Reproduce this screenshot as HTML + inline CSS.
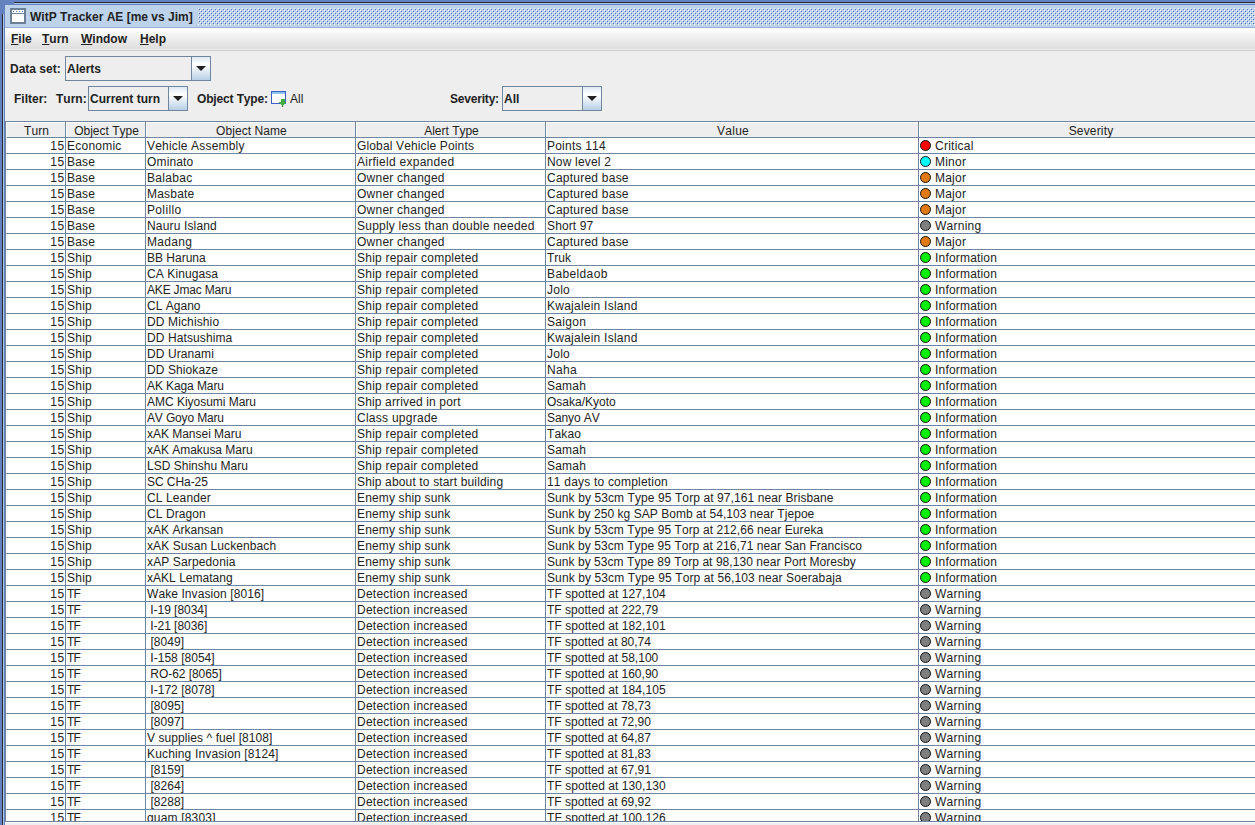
<!DOCTYPE html>
<html><head><meta charset="utf-8">
<style>
*{margin:0;padding:0;box-sizing:border-box}
html,body{width:1255px;height:825px;overflow:hidden}
body{position:relative;font-kerning:none;text-rendering:optimizeSpeed;background:#6382bf;font-family:"Liberation Sans",sans-serif;font-size:12px;color:#222;line-height:16px}
div,span,svg{position:absolute;white-space:pre}
.b{font-weight:bold}
#title{left:5px;top:5px;width:1250px;height:22px;background:#bdd3ec}
#menubar{left:5px;top:28px;width:1250px;height:23px;background:linear-gradient(#ffffff,#dadada)}
#content{left:5px;top:51px;width:1250px;height:774px;background:#eeeeee}
.combo{height:25px;border:1px solid #6f86a0;background:#eeeeee}
.cbtn{top:0;height:23px;border-left:1px solid #6f86a0;background:linear-gradient(#dde8f3 0%,#ffffff 30%,#ffffff 35%,#b8cfe5 100%)}
.arrow{width:0;height:0;border-left:5px solid transparent;border-right:5px solid transparent;border-top:5px solid #222}
#sp{left:5px;top:121px;width:1260px;height:701px;border-top:1px solid #6f86a0;border-left:1px solid #6f86a0;border-bottom:1px solid #6f86a0;}
#spw{left:5px;top:822px;width:1250px;height:1px;background:#ffffff}
#tbl{left:6px;top:122px;width:1249px;height:699px;overflow:hidden;background:#ffffff}
#hdr{left:0;top:0;width:1249px;height:16px;background:#eeeeee}
.hc{top:123px;height:15px;text-align:center;line-height:16px}
.hd{top:122px;width:1px;height:16px;background:#6f86a0}
.hw{top:122px;width:1px;height:15px;background:#ffffff}
#hbot{left:1px;top:15px;width:1248px;height:1px;background:#6f86a0}
#htop{left:0;top:0;width:1249px;height:1px;background:#ffffff}
.r{left:0;height:16px;width:1249px}
.c{top:0;line-height:16px}
.num{text-align:right}
.dot{top:2px;width:11px;height:11px;border-radius:50%;border:1px solid #111}
.gh{left:6px;width:1255px;height:1px;background:#6f86a0}
.gv{top:122px;width:1px;height:700px;background:#6f86a0}
</style></head><body>
<!-- frame -->
<div style="left:14px;top:2px;width:1241px;height:1px;background:#2a2a35"></div>
<div style="left:2px;top:14px;width:1px;height:811px;background:#2a2a35"></div>
<div style="left:14px;top:3px;width:1241px;height:1px;background:#a9c6e8"></div>
<div style="left:3px;top:14px;width:1px;height:811px;background:#a9c6e8"></div>

<div id="title">
  <svg style="left:5px;top:3px" width="16" height="16" viewBox="0 0 16 16">
    <rect x="1" y="1" width="14" height="14" fill="#ffffff" stroke="#6b7f96" stroke-width="2"/>
    <rect x="2" y="5" width="12" height="1" fill="#6b7f96"/>
    <rect x="3" y="3" width="1" height="1" fill="#3b6fd0"/>
    <rect x="6" y="3" width="1" height="1" fill="#3b6fd0"/>
    <rect x="9" y="3" width="1" height="1" fill="#3b6fd0"/>
    <rect x="12" y="3" width="1" height="1" fill="#3b6fd0"/>
  </svg>
  <div class="b" style="left:25px;top:4px">WitP Tracker AE [me vs Jim]</div>
  <svg style="left:193px;top:3px" width="1057" height="17">
    <defs><pattern id="bump" width="4" height="4" patternUnits="userSpaceOnUse">
      <rect x="0" y="0" width="1" height="1" fill="#ffffff"/>
      <rect x="2" y="2" width="1" height="1" fill="#ffffff"/>
      <rect x="1" y="1" width="1" height="1" fill="#4a68c8"/>
      <rect x="3" y="3" width="1" height="1" fill="#4a68c8"/>
    </pattern></defs>
    <rect width="1057" height="17" fill="url(#bump)"/>
  </svg>
</div>
<div style="left:5px;top:27px;width:1250px;height:1px;background:#9aaed6"></div>

<div id="menubar">
  <div class="b" style="left:6px;top:3px"><u>F</u>ile</div>
  <div class="b" style="left:37px;top:3px"><u>T</u>urn</div>
  <div class="b" style="left:76px;top:3px"><u>W</u>indow</div>
  <div class="b" style="left:135px;top:3px"><u>H</u>elp</div>
</div>
<div style="left:5px;top:49px;width:1250px;height:1px;background:#eeeeee"></div>
<div style="left:5px;top:50px;width:1250px;height:1px;background:#cccccc"></div>

<div id="content"></div>
<div class="b" style="left:10px;top:61px">Data set:</div>
<div class="combo" style="left:65px;top:56px;width:146px">
  <div class="b" style="left:1px;top:4px">Alerts</div>
  <div class="cbtn" style="left:125px;width:19px"><div class="arrow" style="left:4px;top:9px"></div></div>
</div>
<div class="b" style="left:14px;top:91px">Filter:</div>
<div class="b" style="left:56px;top:91px">Turn:</div>
<div class="combo" style="left:88px;top:86px;width:100px">
  <div class="b" style="left:1px;top:4px">Current turn</div>
  <div class="cbtn" style="left:79px;width:19px"><div class="arrow" style="left:4px;top:9px"></div></div>
</div>
<div class="b" style="left:197px;top:91px;letter-spacing:-0.15px">Object Type:</div>
<svg style="left:271px;top:91px" width="16" height="16" viewBox="0 0 16 16" shape-rendering="crispEdges">
  <rect x="0" y="0" width="15" height="13" fill="#3d5fc4"/>
  <rect x="1" y="1" width="13" height="2" fill="#8ec3ee"/>
  <rect x="1" y="3" width="13" height="9" fill="#ffffff"/>
  <rect x="10" y="8" width="4" height="3" fill="#3fae3f"/>
  <polygon points="7,11 15,11 11,15" fill="#3fae3f"/>
  <rect x="11" y="15" width="1" height="1" fill="#1f6a1f"/>
</svg>
<div style="left:290px;top:91px">All</div>
<div class="b" style="left:450px;top:91px;letter-spacing:-0.2px">Severity:</div>
<div class="combo" style="left:502px;top:86px;width:100px">
  <div class="b" style="left:1px;top:4px">All</div>
  <div class="cbtn" style="left:79px;width:19px"><div class="arrow" style="left:4px;top:9px"></div></div>
</div>

<div id="sp"></div>
<div id="spw"></div>
<div id="tbl">
  <div id="hdr">
    <div id="htop"></div>
    <div id="hbot"></div>
  </div>
</div>
<div style="left:6px;top:122px;width:1249px;height:699px;overflow:hidden">
  <div style="left:-6px;top:-122px;width:1255px;height:825px">
<div class="hc" style="left:7px;width:59px;letter-spacing:0.070px;">Turn</div>
<div class="hd" style="left:65px"></div>
<div class="hw" style="left:6px"></div>
<div class="hc" style="left:67px;width:79px;letter-spacing:0.005px;">Object Type</div>
<div class="hd" style="left:145px"></div>
<div class="hw" style="left:66px"></div>
<div class="hc" style="left:147px;width:209px;letter-spacing:0.066px;">Object Name</div>
<div class="hd" style="left:355px"></div>
<div class="hw" style="left:146px"></div>
<div class="hc" style="left:357px;width:189px;letter-spacing:-0.010px;">Alert Type</div>
<div class="hd" style="left:545px"></div>
<div class="hw" style="left:356px"></div>
<div class="hc" style="left:547px;width:372px;letter-spacing:0.286px;">Value</div>
<div class="hd" style="left:918px"></div>
<div class="hw" style="left:546px"></div>
<div class="hc" style="left:920px;width:342px;letter-spacing:0.158px;">Severity</div>
<div class="hd" style="left:1261px"></div>
<div class="hw" style="left:919px"></div>
<div class="r" style="top:138px"><span class="c num" style="left:6px;width:59px;letter-spacing:0.696px;">15</span><span class="c" style="left:67px;letter-spacing:0.240px;">Economic</span><span class="c" style="left:147px;letter-spacing:0.179px;">Vehicle&#32;Assembly</span><span class="c" style="left:357px;letter-spacing:0.141px;">Global&#32;Vehicle&#32;Points</span><span class="c" style="left:547px;letter-spacing:0.220px;">Points&#32;114</span><span class="dot" style="left:920px;background:#ff0000"></span><span class="c" style="left:935px;letter-spacing:0.243px;">Critical</span></div>
<div class="r" style="top:154px"><span class="c num" style="left:6px;width:59px;letter-spacing:0.696px;">15</span><span class="c" style="left:67px;letter-spacing:0.151px;">Base</span><span class="c" style="left:147px;letter-spacing:0.156px;">Ominato</span><span class="c" style="left:357px;letter-spacing:0.276px;">Airfield&#32;expanded</span><span class="c" style="left:547px;letter-spacing:0.179px;">Now&#32;level&#32;2</span><span class="dot" style="left:920px;background:#00ffff"></span><span class="c" style="left:935px;letter-spacing:0.223px;">Minor</span></div>
<div class="r" style="top:170px"><span class="c num" style="left:6px;width:59px;letter-spacing:0.696px;">15</span><span class="c" style="left:67px;letter-spacing:0.151px;">Base</span><span class="c" style="left:147px;letter-spacing:0.297px;">Balabac</span><span class="c" style="left:357px;letter-spacing:0.235px;">Owner&#32;changed</span><span class="c" style="left:547px;letter-spacing:0.235px;">Captured&#32;base</span><span class="dot" style="left:920px;background:#e07b12"></span><span class="c" style="left:935px;letter-spacing:0.223px;">Major</span></div>
<div class="r" style="top:186px"><span class="c num" style="left:6px;width:59px;letter-spacing:0.696px;">15</span><span class="c" style="left:67px;letter-spacing:0.151px;">Base</span><span class="c" style="left:147px;letter-spacing:0.203px;">Masbate</span><span class="c" style="left:357px;letter-spacing:0.235px;">Owner&#32;changed</span><span class="c" style="left:547px;letter-spacing:0.235px;">Captured&#32;base</span><span class="dot" style="left:920px;background:#e07b12"></span><span class="c" style="left:935px;letter-spacing:0.223px;">Major</span></div>
<div class="r" style="top:202px"><span class="c num" style="left:6px;width:59px;letter-spacing:0.696px;">15</span><span class="c" style="left:67px;letter-spacing:0.151px;">Base</span><span class="c" style="left:147px;letter-spacing:0.347px;">Polillo</span><span class="c" style="left:357px;letter-spacing:0.235px;">Owner&#32;changed</span><span class="c" style="left:547px;letter-spacing:0.235px;">Captured&#32;base</span><span class="dot" style="left:920px;background:#e07b12"></span><span class="c" style="left:935px;letter-spacing:0.223px;">Major</span></div>
<div class="r" style="top:218px"><span class="c num" style="left:6px;width:59px;letter-spacing:0.696px;">15</span><span class="c" style="left:67px;letter-spacing:0.151px;">Base</span><span class="c" style="left:147px;letter-spacing:0.156px;">Nauru&#32;Island</span><span class="c" style="left:357px;letter-spacing:0.227px;">Supply&#32;less&#32;than&#32;double&#32;needed</span><span class="c" style="left:547px;letter-spacing:0.126px;">Short&#32;97</span><span class="dot" style="left:920px;background:#7f7f7f"></span><span class="c" style="left:935px;letter-spacing:0.252px;">Warning</span></div>
<div class="r" style="top:234px"><span class="c num" style="left:6px;width:59px;letter-spacing:0.696px;">15</span><span class="c" style="left:67px;letter-spacing:0.151px;">Base</span><span class="c" style="left:147px;letter-spacing:0.320px;">Madang</span><span class="c" style="left:357px;letter-spacing:0.235px;">Owner&#32;changed</span><span class="c" style="left:547px;letter-spacing:0.235px;">Captured&#32;base</span><span class="dot" style="left:920px;background:#e07b12"></span><span class="c" style="left:935px;letter-spacing:0.223px;">Major</span></div>
<div class="r" style="top:250px"><span class="c num" style="left:6px;width:59px;letter-spacing:0.696px;">15</span><span class="c" style="left:67px;letter-spacing:0.235px;">Ship</span><span class="c" style="left:147px;letter-spacing:0.003px;">BB&#32;Haruna</span><span class="c" style="left:357px;letter-spacing:0.224px;">Ship&#32;repair&#32;completed</span><span class="c" style="left:547px;letter-spacing:-0.011px;">Truk</span><span class="dot" style="left:920px;background:#00ee00"></span><span class="c" style="left:935px;letter-spacing:0.188px;">Information</span></div>
<div class="r" style="top:266px"><span class="c num" style="left:6px;width:59px;letter-spacing:0.696px;">15</span><span class="c" style="left:67px;letter-spacing:0.235px;">Ship</span><span class="c" style="left:147px;letter-spacing:0.092px;">CA&#32;Kinugasa</span><span class="c" style="left:357px;letter-spacing:0.224px;">Ship&#32;repair&#32;completed</span><span class="c" style="left:547px;letter-spacing:0.376px;">Babeldaob</span><span class="dot" style="left:920px;background:#00ee00"></span><span class="c" style="left:935px;letter-spacing:0.188px;">Information</span></div>
<div class="r" style="top:282px"><span class="c num" style="left:6px;width:59px;letter-spacing:0.696px;">15</span><span class="c" style="left:67px;letter-spacing:0.235px;">Ship</span><span class="c" style="left:147px;letter-spacing:-0.182px;">AKE&#32;Jmac&#32;Maru</span><span class="c" style="left:357px;letter-spacing:0.224px;">Ship&#32;repair&#32;completed</span><span class="c" style="left:547px;letter-spacing:0.236px;">Jolo</span><span class="dot" style="left:920px;background:#00ee00"></span><span class="c" style="left:935px;letter-spacing:0.188px;">Information</span></div>
<div class="r" style="top:298px"><span class="c num" style="left:6px;width:59px;letter-spacing:0.696px;">15</span><span class="c" style="left:67px;letter-spacing:0.235px;">Ship</span><span class="c" style="left:147px;letter-spacing:0.023px;">CL&#32;Agano</span><span class="c" style="left:357px;letter-spacing:0.224px;">Ship&#32;repair&#32;completed</span><span class="c" style="left:547px;letter-spacing:0.241px;">Kwajalein&#32;Island</span><span class="dot" style="left:920px;background:#00ee00"></span><span class="c" style="left:935px;letter-spacing:0.188px;">Information</span></div>
<div class="r" style="top:314px"><span class="c num" style="left:6px;width:59px;letter-spacing:0.696px;">15</span><span class="c" style="left:67px;letter-spacing:0.235px;">Ship</span><span class="c" style="left:147px;letter-spacing:0.128px;">DD&#32;Michishio</span><span class="c" style="left:357px;letter-spacing:0.224px;">Ship&#32;repair&#32;completed</span><span class="c" style="left:547px;letter-spacing:0.320px;">Saigon</span><span class="dot" style="left:920px;background:#00ee00"></span><span class="c" style="left:935px;letter-spacing:0.188px;">Information</span></div>
<div class="r" style="top:330px"><span class="c num" style="left:6px;width:59px;letter-spacing:0.696px;">15</span><span class="c" style="left:67px;letter-spacing:0.235px;">Ship</span><span class="c" style="left:147px;letter-spacing:0.104px;">DD&#32;Hatsushima</span><span class="c" style="left:357px;letter-spacing:0.224px;">Ship&#32;repair&#32;completed</span><span class="c" style="left:547px;letter-spacing:0.241px;">Kwajalein&#32;Island</span><span class="dot" style="left:920px;background:#00ee00"></span><span class="c" style="left:935px;letter-spacing:0.188px;">Information</span></div>
<div class="r" style="top:346px"><span class="c num" style="left:6px;width:59px;letter-spacing:0.696px;">15</span><span class="c" style="left:67px;letter-spacing:0.235px;">Ship</span><span class="c" style="left:147px;letter-spacing:0.088px;">DD&#32;Uranami</span><span class="c" style="left:357px;letter-spacing:0.224px;">Ship&#32;repair&#32;completed</span><span class="c" style="left:547px;letter-spacing:0.236px;">Jolo</span><span class="dot" style="left:920px;background:#00ee00"></span><span class="c" style="left:935px;letter-spacing:0.188px;">Information</span></div>
<div class="r" style="top:362px"><span class="c num" style="left:6px;width:59px;letter-spacing:0.696px;">15</span><span class="c" style="left:67px;letter-spacing:0.235px;">Ship</span><span class="c" style="left:147px;letter-spacing:0.093px;">DD&#32;Shiokaze</span><span class="c" style="left:357px;letter-spacing:0.224px;">Ship&#32;repair&#32;completed</span><span class="c" style="left:547px;letter-spacing:0.317px;">Naha</span><span class="dot" style="left:920px;background:#00ee00"></span><span class="c" style="left:935px;letter-spacing:0.188px;">Information</span></div>
<div class="r" style="top:378px"><span class="c num" style="left:6px;width:59px;letter-spacing:0.696px;">15</span><span class="c" style="left:67px;letter-spacing:0.235px;">Ship</span><span class="c" style="left:147px;letter-spacing:-0.098px;">AK&#32;Kaga&#32;Maru</span><span class="c" style="left:357px;letter-spacing:0.224px;">Ship&#32;repair&#32;completed</span><span class="c" style="left:547px;letter-spacing:0.220px;">Samah</span><span class="dot" style="left:920px;background:#00ee00"></span><span class="c" style="left:935px;letter-spacing:0.188px;">Information</span></div>
<div class="r" style="top:394px"><span class="c num" style="left:6px;width:59px;letter-spacing:0.696px;">15</span><span class="c" style="left:67px;letter-spacing:0.235px;">Ship</span><span class="c" style="left:147px;letter-spacing:-0.022px;">AMC&#32;Kiyosumi&#32;Maru</span><span class="c" style="left:357px;letter-spacing:0.145px;">Ship&#32;arrived&#32;in&#32;port</span><span class="c" style="left:547px;letter-spacing:0.004px;">Osaka/Kyoto</span><span class="dot" style="left:920px;background:#00ee00"></span><span class="c" style="left:935px;letter-spacing:0.188px;">Information</span></div>
<div class="r" style="top:410px"><span class="c num" style="left:6px;width:59px;letter-spacing:0.696px;">15</span><span class="c" style="left:67px;letter-spacing:0.235px;">Ship</span><span class="c" style="left:147px;letter-spacing:-0.153px;">AV&#32;Goyo&#32;Maru</span><span class="c" style="left:357px;letter-spacing:0.261px;">Class&#32;upgrade</span><span class="c" style="left:547px;letter-spacing:-0.101px;">Sanyo&#32;AV</span><span class="dot" style="left:920px;background:#00ee00"></span><span class="c" style="left:935px;letter-spacing:0.188px;">Information</span></div>
<div class="r" style="top:426px"><span class="c num" style="left:6px;width:59px;letter-spacing:0.696px;">15</span><span class="c" style="left:67px;letter-spacing:0.235px;">Ship</span><span class="c" style="left:147px;letter-spacing:-0.023px;">xAK&#32;Mansei&#32;Maru</span><span class="c" style="left:357px;letter-spacing:0.224px;">Ship&#32;repair&#32;completed</span><span class="c" style="left:547px;letter-spacing:0.154px;">Takao</span><span class="dot" style="left:920px;background:#00ee00"></span><span class="c" style="left:935px;letter-spacing:0.188px;">Information</span></div>
<div class="r" style="top:442px"><span class="c num" style="left:6px;width:59px;letter-spacing:0.696px;">15</span><span class="c" style="left:67px;letter-spacing:0.235px;">Ship</span><span class="c" style="left:147px;letter-spacing:-0.032px;">xAK&#32;Amakusa&#32;Maru</span><span class="c" style="left:357px;letter-spacing:0.224px;">Ship&#32;repair&#32;completed</span><span class="c" style="left:547px;letter-spacing:0.220px;">Samah</span><span class="dot" style="left:920px;background:#00ee00"></span><span class="c" style="left:935px;letter-spacing:0.188px;">Information</span></div>
<div class="r" style="top:458px"><span class="c num" style="left:6px;width:59px;letter-spacing:0.696px;">15</span><span class="c" style="left:67px;letter-spacing:0.235px;">Ship</span><span class="c" style="left:147px;letter-spacing:0.006px;">LSD&#32;Shinshu&#32;Maru</span><span class="c" style="left:357px;letter-spacing:0.224px;">Ship&#32;repair&#32;completed</span><span class="c" style="left:547px;letter-spacing:0.220px;">Samah</span><span class="dot" style="left:920px;background:#00ee00"></span><span class="c" style="left:935px;letter-spacing:0.188px;">Information</span></div>
<div class="r" style="top:474px"><span class="c num" style="left:6px;width:59px;letter-spacing:0.696px;">15</span><span class="c" style="left:67px;letter-spacing:0.235px;">Ship</span><span class="c" style="left:147px;letter-spacing:-0.063px;">SC&#32;CHa-25</span><span class="c" style="left:357px;letter-spacing:0.149px;">Ship&#32;about&#32;to&#32;start&#32;building</span><span class="c" style="left:547px;letter-spacing:0.198px;">11&#32;days&#32;to&#32;completion</span><span class="dot" style="left:920px;background:#00ee00"></span><span class="c" style="left:935px;letter-spacing:0.188px;">Information</span></div>
<div class="r" style="top:490px"><span class="c num" style="left:6px;width:59px;letter-spacing:0.696px;">15</span><span class="c" style="left:67px;letter-spacing:0.235px;">Ship</span><span class="c" style="left:147px;letter-spacing:0.117px;">CL&#32;Leander</span><span class="c" style="left:357px;letter-spacing:0.138px;">Enemy&#32;ship&#32;sunk</span><span class="c" style="left:547px;letter-spacing:0.090px;">Sunk&#32;by&#32;53cm&#32;Type&#32;95&#32;Torp&#32;at&#32;97,161&#32;near&#32;Brisbane</span><span class="dot" style="left:920px;background:#00ee00"></span><span class="c" style="left:935px;letter-spacing:0.188px;">Information</span></div>
<div class="r" style="top:506px"><span class="c num" style="left:6px;width:59px;letter-spacing:0.696px;">15</span><span class="c" style="left:67px;letter-spacing:0.235px;">Ship</span><span class="c" style="left:147px;letter-spacing:0.077px;">CL&#32;Dragon</span><span class="c" style="left:357px;letter-spacing:0.138px;">Enemy&#32;ship&#32;sunk</span><span class="c" style="left:547px;letter-spacing:0.040px;">Sunk&#32;by&#32;250&#32;kg&#32;SAP&#32;Bomb&#32;at&#32;54,103&#32;near&#32;Tjepoe</span><span class="dot" style="left:920px;background:#00ee00"></span><span class="c" style="left:935px;letter-spacing:0.188px;">Information</span></div>
<div class="r" style="top:522px"><span class="c num" style="left:6px;width:59px;letter-spacing:0.696px;">15</span><span class="c" style="left:67px;letter-spacing:0.235px;">Ship</span><span class="c" style="left:147px;letter-spacing:0.015px;">xAK&#32;Arkansan</span><span class="c" style="left:357px;letter-spacing:0.138px;">Enemy&#32;ship&#32;sunk</span><span class="c" style="left:547px;letter-spacing:0.072px;">Sunk&#32;by&#32;53cm&#32;Type&#32;95&#32;Torp&#32;at&#32;212,66&#32;near&#32;Eureka</span><span class="dot" style="left:920px;background:#00ee00"></span><span class="c" style="left:935px;letter-spacing:0.188px;">Information</span></div>
<div class="r" style="top:538px"><span class="c num" style="left:6px;width:59px;letter-spacing:0.696px;">15</span><span class="c" style="left:67px;letter-spacing:0.235px;">Ship</span><span class="c" style="left:147px;letter-spacing:0.088px;">xAK&#32;Susan&#32;Luckenbach</span><span class="c" style="left:357px;letter-spacing:0.138px;">Enemy&#32;ship&#32;sunk</span><span class="c" style="left:547px;letter-spacing:0.065px;">Sunk&#32;by&#32;53cm&#32;Type&#32;95&#32;Torp&#32;at&#32;216,71&#32;near&#32;San&#32;Francisco</span><span class="dot" style="left:920px;background:#00ee00"></span><span class="c" style="left:935px;letter-spacing:0.188px;">Information</span></div>
<div class="r" style="top:554px"><span class="c num" style="left:6px;width:59px;letter-spacing:0.696px;">15</span><span class="c" style="left:67px;letter-spacing:0.235px;">Ship</span><span class="c" style="left:147px;letter-spacing:0.130px;">xAP&#32;Sarpedonia</span><span class="c" style="left:357px;letter-spacing:0.138px;">Enemy&#32;ship&#32;sunk</span><span class="c" style="left:547px;letter-spacing:0.051px;">Sunk&#32;by&#32;53cm&#32;Type&#32;89&#32;Torp&#32;at&#32;98,130&#32;near&#32;Port&#32;Moresby</span><span class="dot" style="left:920px;background:#00ee00"></span><span class="c" style="left:935px;letter-spacing:0.188px;">Information</span></div>
<div class="r" style="top:570px"><span class="c num" style="left:6px;width:59px;letter-spacing:0.696px;">15</span><span class="c" style="left:67px;letter-spacing:0.235px;">Ship</span><span class="c" style="left:147px;letter-spacing:0.022px;">xAKL&#32;Lematang</span><span class="c" style="left:357px;letter-spacing:0.138px;">Enemy&#32;ship&#32;sunk</span><span class="c" style="left:547px;letter-spacing:0.104px;">Sunk&#32;by&#32;53cm&#32;Type&#32;95&#32;Torp&#32;at&#32;56,103&#32;near&#32;Soerabaja</span><span class="dot" style="left:920px;background:#00ee00"></span><span class="c" style="left:935px;letter-spacing:0.188px;">Information</span></div>
<div class="r" style="top:586px"><span class="c num" style="left:6px;width:59px;letter-spacing:0.696px;">15</span><span class="c" style="left:67px;letter-spacing:-0.865px;">TF</span><span class="c" style="left:147px;letter-spacing:0.084px;">Wake&#32;Invasion&#32;[8016]</span><span class="c" style="left:357px;letter-spacing:0.247px;">Detection&#32;increased</span><span class="c" style="left:547px;letter-spacing:0.060px;">TF&#32;spotted&#32;at&#32;127,104</span><span class="dot" style="left:920px;background:#7f7f7f"></span><span class="c" style="left:935px;letter-spacing:0.252px;">Warning</span></div>
<div class="r" style="top:602px"><span class="c num" style="left:6px;width:59px;letter-spacing:0.696px;">15</span><span class="c" style="left:67px;letter-spacing:-0.865px;">TF</span><span class="c" style="left:147px;letter-spacing:-0.039px;">&#32;I-19&#32;[8034]</span><span class="c" style="left:357px;letter-spacing:0.247px;">Detection&#32;increased</span><span class="c" style="left:547px;letter-spacing:0.028px;">TF&#32;spotted&#32;at&#32;222,79</span><span class="dot" style="left:920px;background:#7f7f7f"></span><span class="c" style="left:935px;letter-spacing:0.252px;">Warning</span></div>
<div class="r" style="top:618px"><span class="c num" style="left:6px;width:59px;letter-spacing:0.696px;">15</span><span class="c" style="left:67px;letter-spacing:-0.865px;">TF</span><span class="c" style="left:147px;letter-spacing:-0.039px;">&#32;I-21&#32;[8036]</span><span class="c" style="left:357px;letter-spacing:0.247px;">Detection&#32;increased</span><span class="c" style="left:547px;letter-spacing:0.060px;">TF&#32;spotted&#32;at&#32;182,101</span><span class="dot" style="left:920px;background:#7f7f7f"></span><span class="c" style="left:935px;letter-spacing:0.252px;">Warning</span></div>
<div class="r" style="top:634px"><span class="c num" style="left:6px;width:59px;letter-spacing:0.696px;">15</span><span class="c" style="left:67px;letter-spacing:-0.865px;">TF</span><span class="c" style="left:147px;letter-spacing:0.045px;">&#32;[8049]</span><span class="c" style="left:357px;letter-spacing:0.247px;">Detection&#32;increased</span><span class="c" style="left:547px;letter-spacing:-0.007px;">TF&#32;spotted&#32;at&#32;80,74</span><span class="dot" style="left:920px;background:#7f7f7f"></span><span class="c" style="left:935px;letter-spacing:0.252px;">Warning</span></div>
<div class="r" style="top:650px"><span class="c num" style="left:6px;width:59px;letter-spacing:0.696px;">15</span><span class="c" style="left:67px;letter-spacing:-0.865px;">TF</span><span class="c" style="left:147px;letter-spacing:0.018px;">&#32;I-158&#32;[8054]</span><span class="c" style="left:357px;letter-spacing:0.247px;">Detection&#32;increased</span><span class="c" style="left:547px;letter-spacing:0.028px;">TF&#32;spotted&#32;at&#32;58,100</span><span class="dot" style="left:920px;background:#7f7f7f"></span><span class="c" style="left:935px;letter-spacing:0.252px;">Warning</span></div>
<div class="r" style="top:666px"><span class="c num" style="left:6px;width:59px;letter-spacing:0.696px;">15</span><span class="c" style="left:67px;letter-spacing:-0.865px;">TF</span><span class="c" style="left:147px;letter-spacing:-0.051px;">&#32;RO-62&#32;[8065]</span><span class="c" style="left:357px;letter-spacing:0.247px;">Detection&#32;increased</span><span class="c" style="left:547px;letter-spacing:0.028px;">TF&#32;spotted&#32;at&#32;160,90</span><span class="dot" style="left:920px;background:#7f7f7f"></span><span class="c" style="left:935px;letter-spacing:0.252px;">Warning</span></div>
<div class="r" style="top:682px"><span class="c num" style="left:6px;width:59px;letter-spacing:0.696px;">15</span><span class="c" style="left:67px;letter-spacing:-0.865px;">TF</span><span class="c" style="left:147px;letter-spacing:0.018px;">&#32;I-172&#32;[8078]</span><span class="c" style="left:357px;letter-spacing:0.247px;">Detection&#32;increased</span><span class="c" style="left:547px;letter-spacing:0.060px;">TF&#32;spotted&#32;at&#32;184,105</span><span class="dot" style="left:920px;background:#7f7f7f"></span><span class="c" style="left:935px;letter-spacing:0.252px;">Warning</span></div>
<div class="r" style="top:698px"><span class="c num" style="left:6px;width:59px;letter-spacing:0.696px;">15</span><span class="c" style="left:67px;letter-spacing:-0.865px;">TF</span><span class="c" style="left:147px;letter-spacing:0.045px;">&#32;[8095]</span><span class="c" style="left:357px;letter-spacing:0.247px;">Detection&#32;increased</span><span class="c" style="left:547px;letter-spacing:-0.007px;">TF&#32;spotted&#32;at&#32;78,73</span><span class="dot" style="left:920px;background:#7f7f7f"></span><span class="c" style="left:935px;letter-spacing:0.252px;">Warning</span></div>
<div class="r" style="top:714px"><span class="c num" style="left:6px;width:59px;letter-spacing:0.696px;">15</span><span class="c" style="left:67px;letter-spacing:-0.865px;">TF</span><span class="c" style="left:147px;letter-spacing:0.045px;">&#32;[8097]</span><span class="c" style="left:357px;letter-spacing:0.247px;">Detection&#32;increased</span><span class="c" style="left:547px;letter-spacing:-0.007px;">TF&#32;spotted&#32;at&#32;72,90</span><span class="dot" style="left:920px;background:#7f7f7f"></span><span class="c" style="left:935px;letter-spacing:0.252px;">Warning</span></div>
<div class="r" style="top:730px"><span class="c num" style="left:6px;width:59px;letter-spacing:0.696px;">15</span><span class="c" style="left:67px;letter-spacing:-0.865px;">TF</span><span class="c" style="left:147px;letter-spacing:0.074px;">V&#32;supplies&#32;^&#32;fuel&#32;[8108]</span><span class="c" style="left:357px;letter-spacing:0.247px;">Detection&#32;increased</span><span class="c" style="left:547px;letter-spacing:-0.007px;">TF&#32;spotted&#32;at&#32;64,87</span><span class="dot" style="left:920px;background:#7f7f7f"></span><span class="c" style="left:935px;letter-spacing:0.252px;">Warning</span></div>
<div class="r" style="top:746px"><span class="c num" style="left:6px;width:59px;letter-spacing:0.696px;">15</span><span class="c" style="left:67px;letter-spacing:-0.865px;">TF</span><span class="c" style="left:147px;letter-spacing:0.152px;">Kuching&#32;Invasion&#32;[8124]</span><span class="c" style="left:357px;letter-spacing:0.247px;">Detection&#32;increased</span><span class="c" style="left:547px;letter-spacing:-0.007px;">TF&#32;spotted&#32;at&#32;81,83</span><span class="dot" style="left:920px;background:#7f7f7f"></span><span class="c" style="left:935px;letter-spacing:0.252px;">Warning</span></div>
<div class="r" style="top:762px"><span class="c num" style="left:6px;width:59px;letter-spacing:0.696px;">15</span><span class="c" style="left:67px;letter-spacing:-0.865px;">TF</span><span class="c" style="left:147px;letter-spacing:0.045px;">&#32;[8159]</span><span class="c" style="left:357px;letter-spacing:0.247px;">Detection&#32;increased</span><span class="c" style="left:547px;letter-spacing:-0.007px;">TF&#32;spotted&#32;at&#32;67,91</span><span class="dot" style="left:920px;background:#7f7f7f"></span><span class="c" style="left:935px;letter-spacing:0.252px;">Warning</span></div>
<div class="r" style="top:778px"><span class="c num" style="left:6px;width:59px;letter-spacing:0.696px;">15</span><span class="c" style="left:67px;letter-spacing:-0.865px;">TF</span><span class="c" style="left:147px;letter-spacing:0.045px;">&#32;[8264]</span><span class="c" style="left:357px;letter-spacing:0.247px;">Detection&#32;increased</span><span class="c" style="left:547px;letter-spacing:0.060px;">TF&#32;spotted&#32;at&#32;130,130</span><span class="dot" style="left:920px;background:#7f7f7f"></span><span class="c" style="left:935px;letter-spacing:0.252px;">Warning</span></div>
<div class="r" style="top:794px"><span class="c num" style="left:6px;width:59px;letter-spacing:0.696px;">15</span><span class="c" style="left:67px;letter-spacing:-0.865px;">TF</span><span class="c" style="left:147px;letter-spacing:0.045px;">&#32;[8288]</span><span class="c" style="left:357px;letter-spacing:0.247px;">Detection&#32;increased</span><span class="c" style="left:547px;letter-spacing:-0.007px;">TF&#32;spotted&#32;at&#32;69,92</span><span class="dot" style="left:920px;background:#7f7f7f"></span><span class="c" style="left:935px;letter-spacing:0.252px;">Warning</span></div>
<div class="r" style="top:810px"><span class="c num" style="left:6px;width:59px;letter-spacing:0.696px;">15</span><span class="c" style="left:67px;letter-spacing:-0.865px;">TF</span><span class="c" style="left:147px;letter-spacing:0.177px;">guam&#32;[8303]</span><span class="c" style="left:357px;letter-spacing:0.247px;">Detection&#32;increased</span><span class="c" style="left:547px;letter-spacing:0.060px;">TF&#32;spotted&#32;at&#32;100,126</span><span class="dot" style="left:920px;background:#7f7f7f"></span><span class="c" style="left:935px;letter-spacing:0.252px;">Warning</span></div>
<div class="gh" style="top:153px"></div>
<div class="gh" style="top:169px"></div>
<div class="gh" style="top:185px"></div>
<div class="gh" style="top:201px"></div>
<div class="gh" style="top:217px"></div>
<div class="gh" style="top:233px"></div>
<div class="gh" style="top:249px"></div>
<div class="gh" style="top:265px"></div>
<div class="gh" style="top:281px"></div>
<div class="gh" style="top:297px"></div>
<div class="gh" style="top:313px"></div>
<div class="gh" style="top:329px"></div>
<div class="gh" style="top:345px"></div>
<div class="gh" style="top:361px"></div>
<div class="gh" style="top:377px"></div>
<div class="gh" style="top:393px"></div>
<div class="gh" style="top:409px"></div>
<div class="gh" style="top:425px"></div>
<div class="gh" style="top:441px"></div>
<div class="gh" style="top:457px"></div>
<div class="gh" style="top:473px"></div>
<div class="gh" style="top:489px"></div>
<div class="gh" style="top:505px"></div>
<div class="gh" style="top:521px"></div>
<div class="gh" style="top:537px"></div>
<div class="gh" style="top:553px"></div>
<div class="gh" style="top:569px"></div>
<div class="gh" style="top:585px"></div>
<div class="gh" style="top:601px"></div>
<div class="gh" style="top:617px"></div>
<div class="gh" style="top:633px"></div>
<div class="gh" style="top:649px"></div>
<div class="gh" style="top:665px"></div>
<div class="gh" style="top:681px"></div>
<div class="gh" style="top:697px"></div>
<div class="gh" style="top:713px"></div>
<div class="gh" style="top:729px"></div>
<div class="gh" style="top:745px"></div>
<div class="gh" style="top:761px"></div>
<div class="gh" style="top:777px"></div>
<div class="gh" style="top:793px"></div>
<div class="gh" style="top:809px"></div>
<div class="gh" style="top:825px"></div>
<div class="gv" style="left:65px"></div>
<div class="gv" style="left:145px"></div>
<div class="gv" style="left:355px"></div>
<div class="gv" style="left:545px"></div>
<div class="gv" style="left:918px"></div>
  </div>
</div>
</body></html>
